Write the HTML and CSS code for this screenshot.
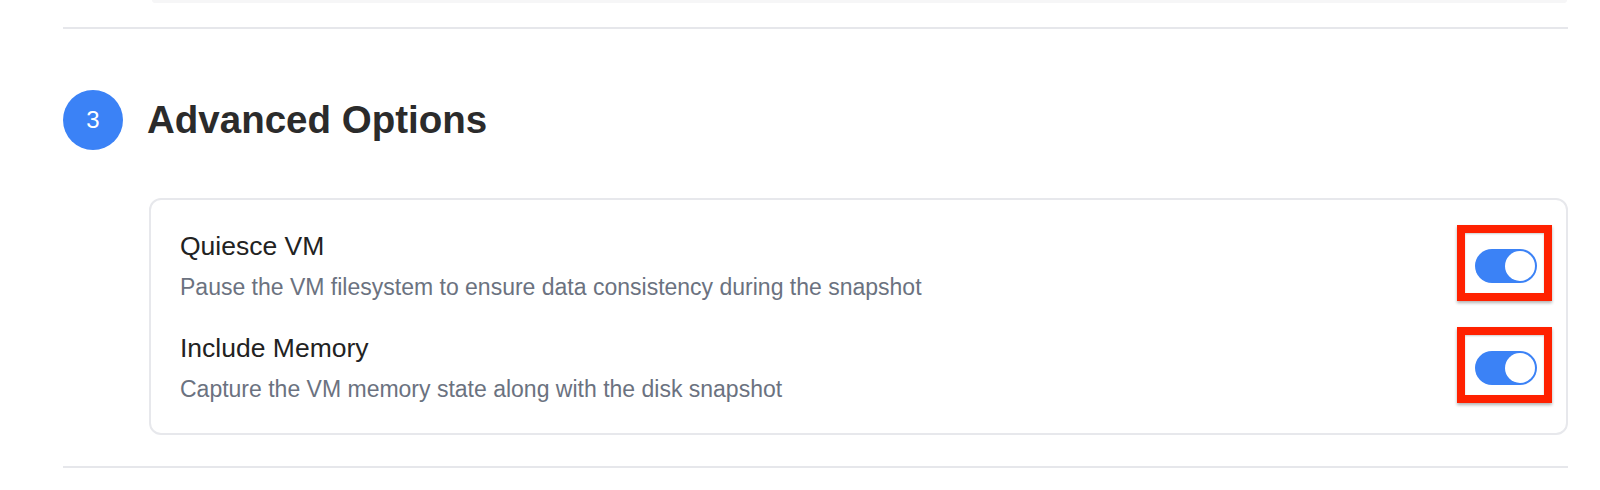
FILE: index.html
```html
<!DOCTYPE html>
<html lang="en">
<head>
    <meta charset="UTF-8">
    <title>Snapshot - Advanced Options</title>
    <link rel="stylesheet" href="styles.css">
</head>
<body>
    <div class="page">
        <div class="step step_prev">
            <div class="step_prev_card"></div>
        </div>

        <div class="step">
            <div class="step_head">
                <div class="step_num">3</div>
                <h2 class="step_title">Advanced Options</h2>
            </div>
            <div class="options">
                <div class="option">
                    <div class="option_text">
                        <div class="option_name">Quiesce VM</div>
                        <div class="option_desc">Pause the VM filesystem to ensure data consistency during the snapshot</div>
                    </div>
                    <div class="switch on">
                        <div class="switch_knob"></div>
                        <div class="mark"></div>
                    </div>
                </div>
                <div class="option">
                    <div class="option_text">
                        <div class="option_name">Include Memory</div>
                        <div class="option_desc">Capture the VM memory state along with the disk snapshot</div>
                    </div>
                    <div class="switch on">
                        <div class="switch_knob"></div>
                        <div class="mark"></div>
                    </div>
                </div>
            </div>
        </div>
    </div>
</body>
</html>
```

FILE: styles.css
```css
*{
    margin: 0;
    padding: 0;
    box-sizing: border-box;
}
body{
    background: #fff;
    font-family: "Liberation Sans", Arial, Helvetica, sans-serif;
}
.page{
    width: 1505px;
    margin-left: 63px;
}
.step{
    border-bottom: 2px solid #e6e7eb;
    padding: 61px 0 31px;
}
.step_prev{
    padding: 0 0 24px;
}
.step_prev_card{
    height: 3px;
    margin: 0 1px 0 89px;
    background: #f6f6f7;
    border-radius: 0 0 6px 6px;
}
.step_head{
    display: flex;
    align-items: center;
    gap: 24px;
    margin-bottom: 48px;
}
.step_num{
    width: 60px;
    height: 60px;
    border-radius: 50%;
    background: #3b82f6;
    color: #fff;
    font-size: 24px;
    display: flex;
    align-items: center;
    justify-content: center;
}
.step_title{
    font-size: 38.5px;
    font-weight: bold;
    color: #2b2b2b;
    line-height: 46px;
}
.options{
    margin-left: 86px;
    border: 2px solid #e7e8ec;
    border-radius: 12px;
    padding: 30px 29px 29px 29px;
    display: flex;
    flex-direction: column;
    gap: 30px;
}
.option{
    display: flex;
    align-items: center;
    justify-content: space-between;
}
.option_name{
    font-size: 26.5px;
    line-height: 32px;
    color: #222;
    margin-bottom: 10px;
}
.option_desc{
    font-size: 23px;
    line-height: 30px;
    color: #6b7280;
}
.switch{
    width: 62px;
    height: 34px;
    border-radius: 17px;
    background: #d1d5db;
    position: relative;
    display: flex;
    align-items: center;
    padding: 0 2px;
}
.switch.on{
    background: #3b82f6;
    justify-content: flex-end;
}
.switch_knob{
    width: 30px;
    height: 30px;
    border-radius: 50%;
    background: #fff;
}
/* red highlight drawn over the switch */
.mark{
    position: absolute;
    left: -18px;
    right: -15px;
    top: -24px;
    bottom: -18px;
    border: 8px solid #ff2100;
    box-shadow: 0 2px 3px rgba(0,0,0,0.3), inset 0 1px 2px rgba(0,0,0,0.2);
}
```
